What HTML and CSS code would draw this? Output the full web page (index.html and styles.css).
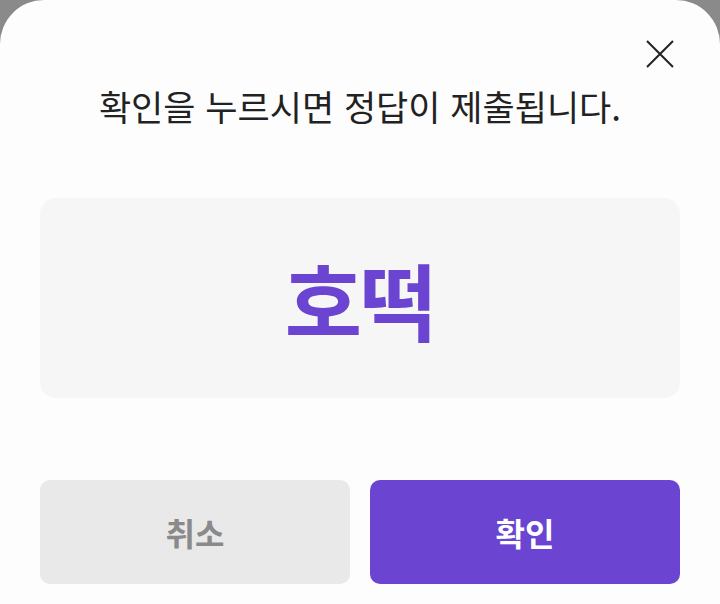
FILE: index.html
```html
<!DOCTYPE html>
<html lang="ko">
<head>
	<meta charset="UTF-8">
	<meta name="viewport" content="width=device-width, initial-scale=1">
	<title>정답 제출</title>
	<link rel="stylesheet" href="styles.css">
</head>
<body>
	<div class="sheet">
		<button type="button" class="close-btn" aria-label="닫기">
			<svg width="28" height="28" viewBox="0 0 28 28">
				<path d="M1 1 L27 27 M27 1 L1 27" stroke="#222" stroke-width="2" fill="none"/>
			</svg>
		</button>
		<p class="notice">확인을 누르시면 정답이 제출됩니다.</p>
		<div class="answer-box">
			<span class="answer">호떡</span>
		</div>
		<div class="actions">
			<button type="button" class="btn btn-cancel">취소</button>
			<button type="button" class="btn btn-ok">확인</button>
		</div>
	</div>
</body>
</html>
```

FILE: styles.css
```css
html, body{
	margin: 0;
	padding: 0;
	height: 100%;
}
body{
	background-color: #8a8a8a;
	font-family: "Noto Sans CJK KR", "Noto Sans", sans-serif;
	overflow: hidden;
}
.sheet{
	position: relative;
	height: 604px;
	box-sizing: border-box;
	background-color: #fdfdfd;
	border-radius: 44px 44px 0 0;
	padding: 81px 40px 20px;
	display: flex;
	flex-direction: column;
}
.close-btn{
	position: absolute;
	top: 40px;
	right: 46px;
	width: 28px;
	height: 28px;
	padding: 0;
	border: none;
	background: none;
}
.close-btn svg{
	display: block;
}
.notice{
	margin: 0;
	text-align: center;
	font-size: 35px;
	line-height: 50px;
	color: #222;
}
.answer-box{
	margin-top: 67px;
	height: 200px;
	background-color: #f6f6f6;
	border-radius: 16px;
	display: flex;
	align-items: center;
	justify-content: center;
}
.answer{
	font-size: 84px;
	font-weight: bold;
	color: #6b44d1;
	letter-spacing: -2px;
}
.actions{
	margin-top: auto;
	display: flex;
	gap: 20px;
}
.btn{
	flex: 1;
	height: 104px;
	border: none;
	border-radius: 10px;
	font-family: "Noto Sans CJK KR", "Noto Sans", sans-serif;
	font-size: 32px;
	font-weight: bold;
}
.btn-cancel{
	background-color: #e9e9e9;
	color: #8a8a8a;
}
.btn-ok{
	background-color: #6b44d1;
	color: #fff;
}
```
